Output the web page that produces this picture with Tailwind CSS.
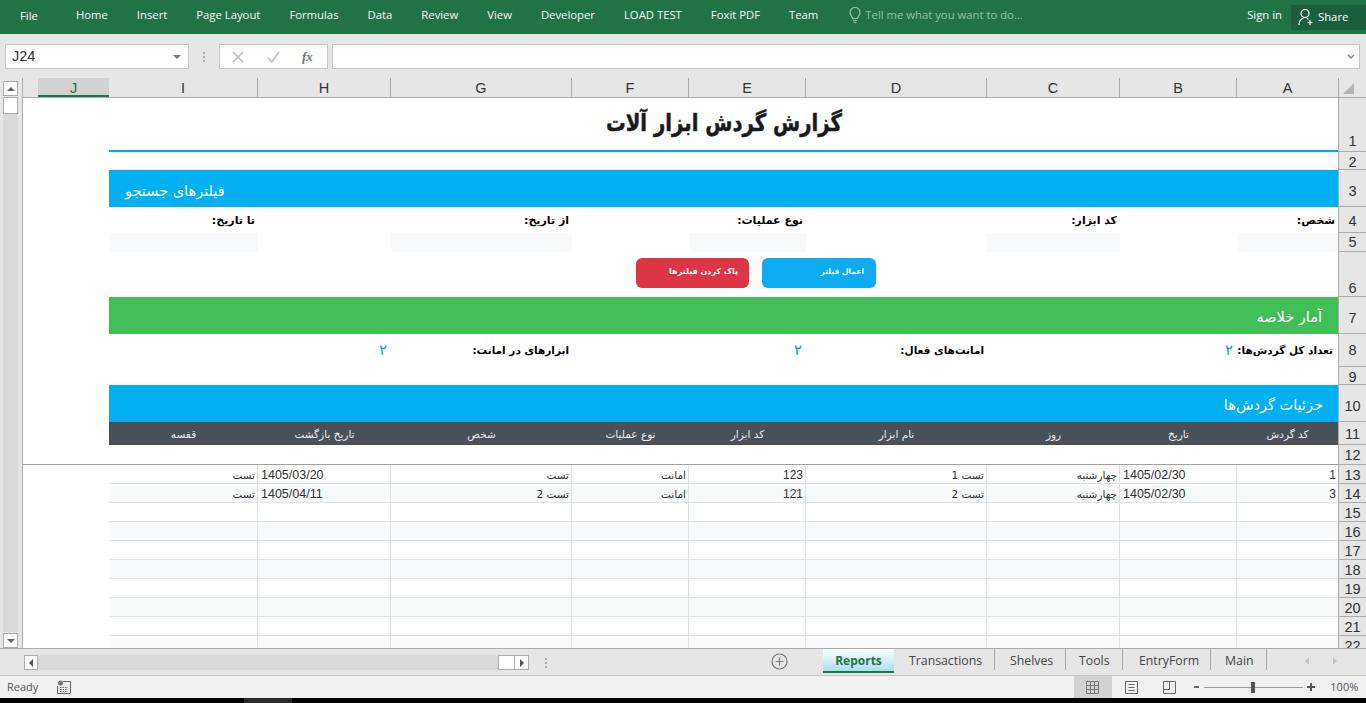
<!DOCTYPE html>
<html lang="en">
<head>
  <meta charset="UTF-8" />
  <title>Reports - Excel</title>
  <script src="https://cdn.jsdelivr.net/npm/@tailwindcss/browser@4"></script>
</head>
<body class="w-[1366px] h-[703px] overflow-hidden bg-black font-['Open_Sans',sans-serif]">

  <!-- Ribbon tabs -->
  <div class="h-[34px] bg-[#217346] text-white text-[11.300px] flex items-center relative pb-[3px]">
    <span class="ml-[20px] mr-[38px] mt-[1px]">File</span>
    <nav class="flex gap-[29px] text-[#f2f7f4]">
      <span>Home</span><span>Insert</span><span>Page Layout</span><span>Formulas</span><span>Data</span><span>Review</span><span>View</span><span>Developer</span><span>LOAD TEST</span><span>Foxit PDF</span><span>Team</span>
    </nav>
    <div class="flex items-center ml-[30px] text-[#92c3a6]">
      <svg class="w-[14px] h-[17px] mr-[3px]" viewBox="0 0 14 17" fill="none" stroke="#92c3a6" stroke-width="1.2"><path d="M4.5 11.5C4.5 9.5 2 8.5 2 5.5a5 5 0 0 1 10 0c0 3-2.500 4-2.500 6z"/><path d="M5 13.500h4M5.500 15.500h3"/></svg>
      <span>Tell me what you want to do...</span>
    </div>
    <span class="ml-auto mr-[9px]">Sign in</span>
    <div class="w-[75px] h-[25px] bg-[#1b5e3a] flex items-center pl-[7px] mr-0 mt-[3px]">
      <svg class="w-[16px] h-[18px] mr-[4px]" viewBox="0 0 16 18" fill="none" stroke="#fff" stroke-width="1.2"><circle cx="7" cy="5.500" r="4"/><path d="M1 17c0-3.500 2-6 4.500-7M9 10.500l1.500 1M12 12v5M9.500 14.500h5"/></svg>
      <span>Share</span>
    </div>
  </div>

  <!-- Formula bar -->
  <div class="h-[44px] bg-[#e6e6e6] flex items-start pt-[10px] pl-[5px] font-['Liberation_Sans',sans-serif]">
    <div class="w-[184px] h-[25px] bg-white border border-[#c6c6c6] flex items-center justify-between pl-[6px] pr-[7px] text-[14.500px] text-[#333]">
      <span>J24</span>
      <span class="w-0 h-0 border-x-[4px] border-x-transparent border-t-[4px] border-t-[#777]"></span>
    </div>
    <div class="w-[30px] h-[25px] flex flex-col items-center justify-center gap-[2px]">
      <i class="w-[2px] h-[2px] bg-[#aaa]"></i><i class="w-[2px] h-[2px] bg-[#aaa]"></i><i class="w-[2px] h-[2px] bg-[#aaa]"></i>
    </div>
    <div class="w-[109px] h-[25px] bg-white border border-[#c6c6c6] flex items-center pl-[12px] gap-[23px]">
      <svg class="w-[12px] h-[12px]" viewBox="0 0 13 13" fill="none" stroke="#c4c4c4" stroke-width="1.800"><path d="M1 1l11 11M12 1L1 12"/></svg>
      <svg class="w-[13px] h-[12px]" viewBox="0 0 14 13" fill="none" stroke="#c4c4c4" stroke-width="1.800"><path d="M1 7l4 5 8-11"/></svg>
      <span class="ml-[-1px] font-['Liberation_Serif',serif] italic font-bold text-[13px] text-[#777]">fx</span>
    </div>
    <div class="w-[1028px] h-[25px] ml-[4px] bg-white border border-[#c6c6c6] flex items-center justify-end pr-[4px]">
      <svg class="w-[8px] h-[6px]" viewBox="0 0 8 6" fill="none" stroke="#888" stroke-width="1.500"><path d="M1 1l3 3 3-3"/></svg>
    </div>
  </div>

  <!-- Sheet area -->
  <div class="h-[570px] bg-[#e6e6e6] flex overflow-hidden">
    <!-- Vertical scrollbar (sheet is right-to-left) -->
    <div class="w-[22px] h-full flex flex-col pl-[3px] pr-[4px] pt-[3px] gap-[1px] shrink-0">
      <div class="h-[15px] bg-white border border-[#ababab] flex items-center justify-center shrink-0">
        <span class="w-0 h-0 border-x-[4px] border-x-transparent border-b-[4px] border-b-[#666]"></span>
      </div>
      <div class="flex-1 bg-[#d9d9d9]">
        <div class="h-[17px] bg-white border border-[#ababab]"></div>
      </div>
      <div class="h-[15px] bg-white border border-[#ababab] flex items-center justify-center shrink-0">
        <span class="w-0 h-0 border-x-[4px] border-x-transparent border-t-[4px] border-t-[#666]"></span>
      </div>
    </div>

    <div id="sheet" class="w-[1344px] grid grid-cols-[86px_149px_133px_181px_117px_117px_181px_133px_117px_101px_28px] grid-rows-[20px_54px_18px_37px_26px_19px_45px_37px_33px_18px_37px_23px_20px_19px_19px_19px_19px_19px_19px_19px_19px_19px_19px] font-['Liberation_Sans',sans-serif] text-[14.500px] text-[#333] bg-white border-l border-[#ababab]">
      <!-- Column headers -->
      <div class="bg-[#e6e6e6] border-b border-[#ababab] flex justify-end"><div class="w-[71px] bg-[#d2d2d2] border-b-2 border-[#217346] text-center leading-[20px] text-[#217346]">J</div></div>
      <div class="bg-[#e6e6e6] border-b border-r border-[#ababab] text-center leading-[21px]">I</div>
      <div class="bg-[#e6e6e6] border-b border-r border-[#ababab] text-center leading-[21px]">H</div>
      <div class="bg-[#e6e6e6] border-b border-r border-[#ababab] text-center leading-[21px]">G</div>
      <div class="bg-[#e6e6e6] border-b border-r border-[#ababab] text-center leading-[21px]">F</div>
      <div class="bg-[#e6e6e6] border-b border-r border-[#ababab] text-center leading-[21px]">E</div>
      <div class="bg-[#e6e6e6] border-b border-r border-[#ababab] text-center leading-[21px]">D</div>
      <div class="bg-[#e6e6e6] border-b border-r border-[#ababab] text-center leading-[21px]">C</div>
      <div class="bg-[#e6e6e6] border-b border-r border-[#ababab] text-center leading-[21px]">B</div>
      <div class="bg-[#e6e6e6] border-b border-[#ababab] text-center leading-[21px]">A</div>
      <div class="bg-[#e6e6e6] border-b border-l border-[#ababab] flex items-end pl-[4px] pb-[3px]"><span class="w-0 h-0 border-l-[11px] border-l-transparent border-b-[11px] border-b-[#b4b4b4]"></span></div>

      <!-- Row 1: title -->
      <div></div>
      <div dir="rtl" class="col-span-9 border-b-2 border-[#00aeef] text-center font-['DejaVu_Sans',sans-serif] font-bold text-[24px] leading-[50px] text-[#1a1a1a]"><span class="inline-block scale-x-[0.82] [-webkit-text-stroke:0.5px_#1a1a1a]">گزارش گردش ابزار آلات</span></div>
      <div class="bg-[#e6e6e6] border-l border-b border-[#ababab] text-center leading-[24px] pt-[31px]">1</div>

      <!-- Row 2 -->
      <div class="col-span-10"></div>
      <div class="bg-[#e6e6e6] border-l border-b border-[#ababab] text-center leading-[20px]">2</div>

      <!-- Row 3: filters band -->
      <div></div>
      <div dir="ltr" class="col-span-9 bg-[#00b0f0] text-white font-['DejaVu_Sans',sans-serif] text-[14.500px] pl-[16px] flex items-center pt-[6px]"><span dir="rtl">فیلترهای جستجو</span></div>
      <div class="bg-[#e6e6e6] border-l border-b border-[#ababab] text-center leading-[42px]">3</div>

      <!-- Row 4: filter labels -->
      <div></div>
      <div dir="rtl" class="pr-[3px] font-['DejaVu_Sans',sans-serif] font-bold text-[11px] leading-[27px] text-black">تا تاریخ:</div>
      <div></div>
      <div dir="rtl" class="pr-[3px] font-['DejaVu_Sans',sans-serif] font-bold text-[11px] leading-[27px] text-black">از تاریخ:</div>
      <div></div>
      <div dir="rtl" class="pr-[3px] font-['DejaVu_Sans',sans-serif] font-bold text-[11px] leading-[27px] text-black">نوع عملیات:</div>
      <div></div>
      <div dir="rtl" class="pr-[3px] font-['DejaVu_Sans',sans-serif] font-bold text-[11px] leading-[27px] text-black">کد ابزار:</div>
      <div></div>
      <div dir="rtl" class="pr-[3px] font-['DejaVu_Sans',sans-serif] font-bold text-[11px] leading-[27px] text-black">شخص:</div>
      <div class="bg-[#e6e6e6] border-l border-b border-[#ababab] text-center leading-[28px]">4</div>

      <!-- Row 5: filter inputs -->
      <div></div>
      <div class="bg-[#f8f9fa]"></div>
      <div></div>
      <div class="bg-[#f8f9fa]"></div>
      <div></div>
      <div class="bg-[#f8f9fa]"></div>
      <div></div>
      <div class="bg-[#f8f9fa]"></div>
      <div></div>
      <div class="bg-[#f8f9fa]"></div>
      <div class="bg-[#e6e6e6] border-l border-b border-[#ababab] text-center leading-[19px]">5</div>

      <!-- Row 6: buttons -->
      <div class="col-span-10 flex items-start gap-[13px] pl-[613px] pt-[6px] font-['DejaVu_Sans',sans-serif] font-bold text-[8px] text-white">
        <div dir="rtl" class="w-[113px] h-[30px] rounded-[6px] bg-[#dc3545] pr-[11px] leading-[27px]">پاک کردن فیلترها</div>
        <div dir="rtl" class="w-[114px] h-[30px] rounded-[6px] bg-[#0dabef] pr-[12px] leading-[27px] text-[7.500px]">اعمال فیلتر</div>
      </div>
      <div class="bg-[#e6e6e6] border-l border-b border-[#ababab] text-center leading-[20px] pt-[26px]">6</div>

      <!-- Row 7: summary band -->
      <div></div>
      <div dir="rtl" class="col-span-9 bg-[#41be57] text-white font-['DejaVu_Sans',sans-serif] text-[14.500px] pr-[16px] flex items-center pt-[5px]">آمار خلاصه</div>
      <div class="bg-[#e6e6e6] border-l border-b border-[#ababab] text-center leading-[42px]">7</div>

      <!-- Row 8: summary values -->
      <div></div>
      <div></div>
      <div dir="rtl" class="pr-[4px] text-[#0d9ddb] font-['DejaVu_Sans',sans-serif] text-[15px] leading-[32px]">۲</div>
      <div dir="rtl" class="pr-[3px] font-['DejaVu_Sans',sans-serif] font-bold text-[10.500px] leading-[33px] text-black whitespace-nowrap">ابزارهای در امانت:</div>
      <div></div>
      <div dir="rtl" class="pr-[4px] text-[#0d9ddb] font-['DejaVu_Sans',sans-serif] text-[15px] leading-[32px]">۲</div>
      <div dir="rtl" class="pr-[3px] font-['DejaVu_Sans',sans-serif] font-bold text-[10.500px] leading-[33px] text-black whitespace-nowrap">امانت‌های فعال:</div>
      <div></div>
      <div dir="rtl" class="pr-[4px] text-[#0d9ddb] font-['DejaVu_Sans',sans-serif] text-[15px] leading-[32px]">۲</div>
      <div dir="rtl" class="pr-[5px] font-['DejaVu_Sans',sans-serif] font-bold text-[10.500px] leading-[33px] text-black whitespace-nowrap">تعداد کل گردش‌ها:</div>
      <div class="bg-[#e6e6e6] border-l border-b border-[#ababab] text-center leading-[33px]">8</div>

      <!-- Row 9 -->
      <div class="col-span-10"></div>
      <div class="bg-[#e6e6e6] border-l border-b border-[#ababab] text-center leading-[20px]">9</div>

      <!-- Row 10: detail band -->
      <div></div>
      <div dir="rtl" class="col-span-9 bg-[#00b0f0] text-white font-['DejaVu_Sans',sans-serif] text-[14.500px] pr-[15px] flex items-center pt-[5px]">جزئیات گردش‌ها</div>
      <div class="bg-[#e6e6e6] border-l border-b border-[#ababab] text-center leading-[42px]">10</div>

      <!-- Row 11: table header -->
      <div></div>
      <div dir="rtl" class="bg-[#495057] text-[#e9ecef] text-center font-['DejaVu_Sans',sans-serif] text-[10.500px] leading-[25px]">قفسه</div>
      <div dir="rtl" class="bg-[#495057] text-[#e9ecef] text-center font-['DejaVu_Sans',sans-serif] text-[10.500px] leading-[25px]">تاریخ بازگشت</div>
      <div dir="rtl" class="bg-[#495057] text-[#e9ecef] text-center font-['DejaVu_Sans',sans-serif] text-[10.500px] leading-[25px]">شخص</div>
      <div dir="rtl" class="bg-[#495057] text-[#e9ecef] text-center font-['DejaVu_Sans',sans-serif] text-[10.500px] leading-[25px]">نوع عملیات</div>
      <div dir="rtl" class="bg-[#495057] text-[#e9ecef] text-center font-['DejaVu_Sans',sans-serif] text-[10.500px] leading-[25px]">کد ابزار</div>
      <div dir="rtl" class="bg-[#495057] text-[#e9ecef] text-center font-['DejaVu_Sans',sans-serif] text-[10.500px] leading-[25px]">نام ابزار</div>
      <div dir="rtl" class="bg-[#495057] text-[#e9ecef] text-center font-['DejaVu_Sans',sans-serif] text-[10.500px] leading-[25px]">روز</div>
      <div dir="rtl" class="bg-[#495057] text-[#e9ecef] text-center font-['DejaVu_Sans',sans-serif] text-[10.500px] leading-[25px]">تاریخ</div>
      <div dir="rtl" class="bg-[#495057] text-[#e9ecef] text-center font-['DejaVu_Sans',sans-serif] text-[10.500px] leading-[25px]">کد گردش</div>
      <div class="bg-[#e6e6e6] border-l border-b border-[#ababab] text-center leading-[25px]">11</div>

      <!-- Row 12: freeze line below -->
      <div class="col-span-10 border-b border-[#a0a0a0]"></div>
      <div class="bg-[#e6e6e6] border-l border-b border-[#ababab] text-center leading-[20px]">12</div>
    </div>
  </div>

  <!-- Sheet tabs and horizontal scrollbar -->
  <div class="h-[28px] bg-[#e6e6e6] border-t border-[#ababab] border-b border-b-[#c6c6c6] flex items-start text-[12.300px] text-[#444] relative">
    <div class="ml-[24px] mt-[6px] w-[505px] h-[15px] flex bg-[#d9d9d9]">
      <div class="w-[14px] bg-white border border-[#ababab] flex items-center justify-center"><span class="w-0 h-0 border-y-[4px] border-y-transparent border-r-[4px] border-r-[#555]"></span></div>
      <div class="flex-1"></div>
      <div class="w-[17px] bg-white border border-[#ababab]"></div>
      <div class="w-[14px] bg-white border border-l-0 border-[#ababab] flex items-center justify-center"><span class="w-0 h-0 border-y-[4px] border-y-transparent border-l-[4px] border-l-[#555]"></span></div>
    </div>
    <div class="ml-[16px] mt-[9px] flex flex-col gap-[2px]">
      <i class="w-[2px] h-[2px] bg-[#aaa]"></i><i class="w-[2px] h-[2px] bg-[#aaa]"></i><i class="w-[2px] h-[2px] bg-[#aaa]"></i>
    </div>
    <svg class="ml-[224px] mt-[4px] w-[17px] h-[17px]" viewBox="0 0 17 17" fill="none" stroke="#777" stroke-width="1.200"><circle cx="8.500" cy="8.500" r="7.500"/><path d="M8.500 4.500v8M4.500 8.500h8"/></svg>
    <div class="ml-[35px] flex items-start">
      <div class="w-[71px] h-[24px] bg-gradient-to-b from-white to-[#a9dfee] border-b-2 border-[#217346] text-center font-bold text-[12px] text-[#217346] leading-[24px]">Reports</div>
      <div class="w-[101px] h-[21px] pl-[15px] border-r border-[#a6a6a6] leading-[24px]">Transactions</div>
      <div class="w-[71px] h-[21px] pl-[15px] border-r border-[#a6a6a6] leading-[24px]">Shelves</div>
      <div class="w-[57px] h-[21px] pl-[13px] border-r border-[#a6a6a6] leading-[24px]">Tools</div>
      <div class="w-[88px] h-[21px] pl-[16px] border-r border-[#a6a6a6] leading-[24px]">EntryForm</div>
      <div class="w-[56px] h-[21px] pl-[14px] border-r border-[#a6a6a6] leading-[24px]">Main</div>
    </div>
    <div class="ml-[38px] mt-[8px] flex gap-[24px]">
      <span class="w-0 h-0 border-y-[4px] border-y-transparent border-r-[4px] border-r-[#c4c4c4]"></span>
      <span class="w-0 h-0 border-y-[4px] border-y-transparent border-l-[4px] border-l-[#c4c4c4]"></span>
    </div>
  </div>

  <!-- Status bar -->
  <div class="h-[22px] bg-[#f1f1f1] flex items-center text-[11px] text-[#555]">
    <span class="ml-[7px]">Ready</span>
    <svg class="ml-[19px] w-[14px] h-[14px]" viewBox="0 0 14 14" fill="none" stroke="#666"><circle cx="3.500" cy="3" r="2.500" fill="#777" stroke="none"/><path d="M6 1.500h7.500v12H.5V6"/><path d="M3 7.500h8M3 9.500h8M3 11.500h8" stroke-dasharray="1.500 1"/></svg>
    <div class="ml-[1003px] w-[38px] h-[22px] bg-[#d2d2d2] flex items-center justify-center">
      <svg class="w-[13px] h-[13px] ml-[-2px]" viewBox="0 0 13 13" fill="none" stroke="#777"><path d="M.5.500h12v12H.5zM.5 4.500h12M.5 8.500h12M4.500.500v12M8.500.500v12"/></svg>
    </div>
    <svg class="ml-[13px] w-[13px] h-[13px]" viewBox="0 0 13 13" fill="none" stroke="#666"><path d="M.5.500h12v12H.5zM3.500 3.500h6M3.500 6.500h6M3.500 9.500h6"/></svg>
    <svg class="ml-[25px] w-[13px] h-[13px]" viewBox="0 0 13 13" fill="none" stroke="#666"><path d="M.5.500h12v12H.5zM.5 8.500h6v-8"/></svg>
    <span class="ml-[18px] w-[5px] h-[2px] bg-[#666]"></span>
    <div class="ml-[5px] w-[99px] h-[1px] bg-[#999] relative">
      <span class="absolute left-[47px] top-[-5px] w-[4px] h-[11px] bg-[#555]"></span>
    </div>
    <svg class="ml-[4px] w-[8px] h-[8px]" viewBox="0 0 8 8" stroke="#555" stroke-width="2"><path d="M4 0v8M0 4h8"/></svg>
    <span class="ml-[15px]">100%</span>
  </div>

  <!-- Taskbar sliver -->
  <div class="h-[5px] bg-black pl-[244px]"><div class="w-[48px] h-[5px] bg-[#2a2a2a]"></div></div>

  <script>
    // rows 13 to 22
    const rows = [
      ["تست", "1405/03/20", "تست", "امانت", "123", "تست 1", "چهارشنبه", "1405/02/30", "1"],
      ["تست", "1405/04/11", "تست 2", "امانت", "121", "تست 2", "چهارشنبه", "1405/02/30", "3"]
    ];
    const sheet = document.getElementById("sheet");
    for (let r = 0; r < 10; r++) {
      const stripe = r % 2 ? "bg-[#f8f9fa]" : "bg-white";
      sheet.insertAdjacentHTML("beforeend", '<div class="bg-white"></div>');
      for (let c = 0; c < 9; c++) {
        const text = rows[r] ? rows[r][c] : "";
        const isDate = c === 1 || c === 7;
        const isNum = c === 4 || c === 8;
        const type = isDate
          ? "text-left pl-[3px] text-[12.500px]"
          : isNum
          ? "text-right pr-[2px] text-[12px]"
          : "text-right pr-[2px] font-['DejaVu_Sans',sans-serif] text-[10.500px]";
        const dir = isDate || isNum ? "ltr" : "rtl";
        const edge = c === 8 ? "" : "border-r";
        sheet.insertAdjacentHTML("beforeend",
          `<div dir="ltr" class="${stripe} ${edge} border-b border-[#dee2e6] ${type} leading-[20px] text-[#333] overflow-hidden whitespace-nowrap"><span dir="${dir}">${text}</span></div>`);
      }
      sheet.insertAdjacentHTML("beforeend",
        `<div class="bg-[#e6e6e6] border-l border-b border-[#ababab] text-center leading-[21px]">${r + 13}</div>`);
    }
  </script>
</body>
</html>
